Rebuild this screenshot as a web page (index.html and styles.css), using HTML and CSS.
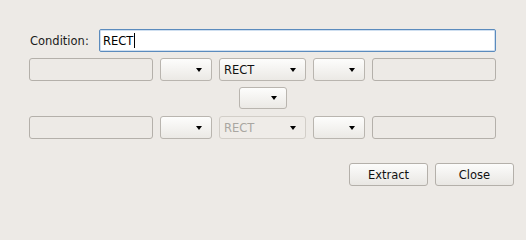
FILE: index.html
```html
<!DOCTYPE html>
<html>
<head>
<meta charset="utf-8">
<link rel="stylesheet" href="styles.css">
</head>
<body>
<div class="dialog">
  <div class="cond-row">
    <label class="label">Condition:</label>
    <div class="entry focus"><span class="entry-text">RECT</span><span class="caret"></span></div>
  </div>
  <div class="row">
    <div class="field"></div>
    <div class="combo small"><span class="arrow"></span></div>
    <div class="combo wide"><span class="combo-text">RECT</span><span class="arrow"></span></div>
    <div class="combo small"><span class="arrow"></span></div>
    <div class="field"></div>
  </div>
  <div class="mid-row">
    <div class="combo mid"><span class="arrow"></span></div>
  </div>
  <div class="row">
    <div class="field"></div>
    <div class="combo small"><span class="arrow"></span></div>
    <div class="combo wide disabled"><span class="combo-text">RECT</span><span class="arrow"></span></div>
    <div class="combo small"><span class="arrow"></span></div>
    <div class="field"></div>
  </div>
  <div class="buttons">
    <button class="btn">Extract</button>
    <button class="btn">Close</button>
  </div>
</div>
</body>
</html>
```
FILE: styles.css
```css
html, body {
  margin: 0;
  padding: 0;
  background: #edeae6;
}
body {
  width: 526px;
  height: 200px;
  overflow: hidden;
  font-family: "DejaVu Sans", sans-serif;
  font-size: 11.5px;
  color: #1a1a1a;
}
.dialog {
  padding: 29px 30px 0 29px;
  display: flex;
  flex-direction: column;
}
.cond-row {
  display: flex;
  align-items: center;
  height: 23px;
}
.label {
  width: 70px;
  padding-left: 1px;
  box-sizing: border-box;
}
.entry {
  flex: 1;
  height: 23px;
  box-sizing: border-box;
  background: #fff;
  border: 1px solid #5b8bbd;
  border-radius: 2px;
  display: flex;
  align-items: center;
  padding-left: 3px;
  box-shadow: inset 0 0 0 1px #cfdff0;
}
.entry-text {
  color: #000;
}
.caret {
  width: 1px;
  height: 15px;
  background: #000;
  margin-left: 1px;
}
.row {
  display: flex;
  gap: 7px;
  margin-top: 6px;
  height: 23px;
}
.field {
  flex: 1;
  box-sizing: border-box;
  border: 1px solid #b4b0aa;
  border-radius: 3px;
  background: #edeae6;
}
.combo {
  position: relative;
  box-sizing: border-box;
  height: 23px;
  border: 1px solid #b9b5af;
  border-radius: 3px;
  background: linear-gradient(#fdfdfc, #ebe9e5);
  display: flex;
  align-items: center;
}
.combo.small { width: 52px; }
.combo.wide { width: 87px; }
.combo.mid { width: 48px; height: 22px; }
.combo-text {
  padding-left: 4px;
  color: #111;
}
.combo.disabled {
  background: #efece8;
  border-color: #d2cec8;
}
.combo.disabled .combo-text { color: #a9a6a1; }
.arrow {
  position: absolute;
  right: 9px;
  top: 50%;
  margin-top: -2px;
  width: 0;
  height: 0;
  border-left: 3.5px solid transparent;
  border-right: 3.5px solid transparent;
  border-top: 4px solid #000;
}
.combo.disabled .arrow {
  border-top-color: #000;
}
.mid-row {
  display: flex;
  justify-content: center;
  margin-top: 6px;
  padding-left: 1px;
}
.mid-row + .row {
  margin-top: 7px;
}
.buttons {
  display: flex;
  justify-content: flex-end;
  gap: 7px;
  margin-top: 24px;
  margin-right: -18px;
}
.btn {
  width: 79px;
  height: 23px;
  box-sizing: border-box;
  font-family: "DejaVu Sans", sans-serif;
  font-size: 11.5px;
  color: #111;
  border: 1px solid #b4b0aa;
  border-radius: 3px;
  background: linear-gradient(#fcfcfb, #e9e7e3);
  padding: 0;
}
```
